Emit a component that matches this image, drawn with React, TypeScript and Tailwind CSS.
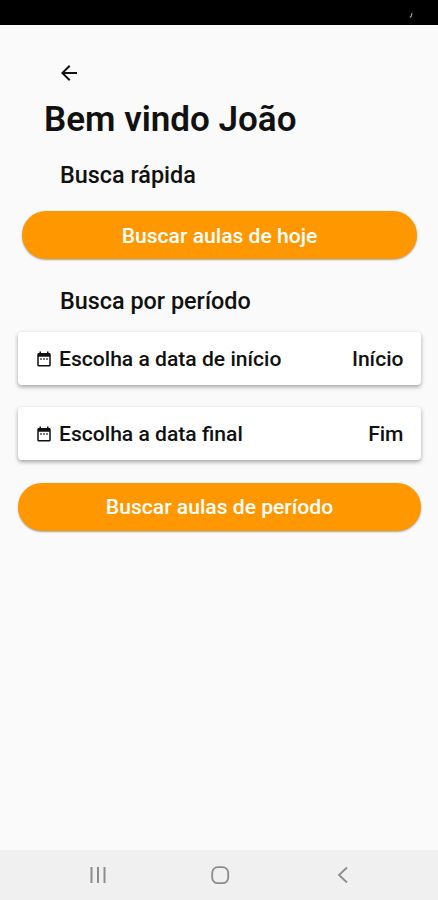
import React from "react";
import { MdArrowBack, MdDateRange } from "react-icons/md";

const dateFields = [
  { id: "start", label: "Escolha a data de início", value: "Início" },
  { id: "end", label: "Escolha a data final", value: "Fim" },
];

const StatusBar = () => (
  <div className="flex h-[25px] shrink-0 justify-end bg-black pt-3 pr-[25px]">
    <svg width="4" height="7" viewBox="0 0 4 7" fill="none">
      <path d="M0.8 5.5 L2.2 4.2 L3 1.2" stroke="#a3a3a3" strokeWidth="1.1" />
    </svg>
  </div>
);

const NavigationBar = () => (
  <nav className="flex h-[50px] shrink-0 items-center bg-[#f0f0f0] pl-[89px]">
    <button aria-label="Recentes">
      <svg width="18" height="18" viewBox="0 0 18 18" fill="none" stroke="#8c8c8c" strokeWidth="2">
        <path d="M2.5 1V17M9 1V17M15.5 1V17" />
      </svg>
    </button>
    <button aria-label="Início" className="ml-[103px]">
      <svg width="20" height="20" viewBox="0 0 20 20" fill="none" stroke="#8c8c8c" strokeWidth="1.8">
        <rect x="2.2" y="2.2" width="16" height="16" rx="5.5" />
      </svg>
    </button>
    <button aria-label="Voltar" className="ml-[104px]">
      <svg width="18" height="18" viewBox="0 0 18 18" fill="none" stroke="#8c8c8c" strokeWidth="1.8">
        <path d="M13 1.5L5 9L13 16.5" />
      </svg>
    </button>
  </nav>
);

export default function App() {
  return (
    <div className="flex h-screen flex-col overflow-hidden bg-[#fafafa] font-['Roboto',sans-serif] text-[#111111]">
      <StatusBar />

      <main className="flex flex-1 flex-col pt-9 pr-[17px] pl-[18px]">
        <button aria-label="Voltar" className="ml-[39px] w-6">
          <MdArrowBack className="size-6" />
        </button>

        <h1 className="mt-[15px] ml-[26px] text-[35px] leading-10 font-semibold">Bem vindo João</h1>

        <h2 className="mt-[19px] ml-[42px] text-[23.4px] leading-8 font-medium">Busca rápida</h2>
        <button className="mx-1 mt-5 h-12 rounded-full bg-[#ff9800] pt-px text-[21.1px] font-medium text-white shadow-[0_1px_2px_rgba(0,0,0,0.35)]">
          Buscar aulas de hoje
        </button>

        <h2 className="mt-[26px] ml-[42px] text-[23.4px] leading-8 font-medium">Busca por período</h2>
        <div className="mt-[15px] flex flex-col gap-[22px]">
          {dateFields.map((field) => (
            <button
              key={field.id}
              className="flex h-[53px] items-center rounded bg-white pr-[17.5px] pt-px pl-[17px] text-[21.1px] font-medium shadow-[0_2px_4px_rgba(0,0,0,0.35)]"
            >
              <MdDateRange className="mr-1.5 size-[18px]" />
              <span>{field.label}</span>
              <span className="ml-auto">{field.value}</span>
            </button>
          ))}
        </div>

        <button className="mt-[23px] h-12 rounded-full bg-[#ff9800] text-[21.1px] font-medium text-white shadow-[0_1px_2px_rgba(0,0,0,0.35)]">
          Buscar aulas de período
        </button>
      </main>

      <NavigationBar />
    </div>
  );
}
